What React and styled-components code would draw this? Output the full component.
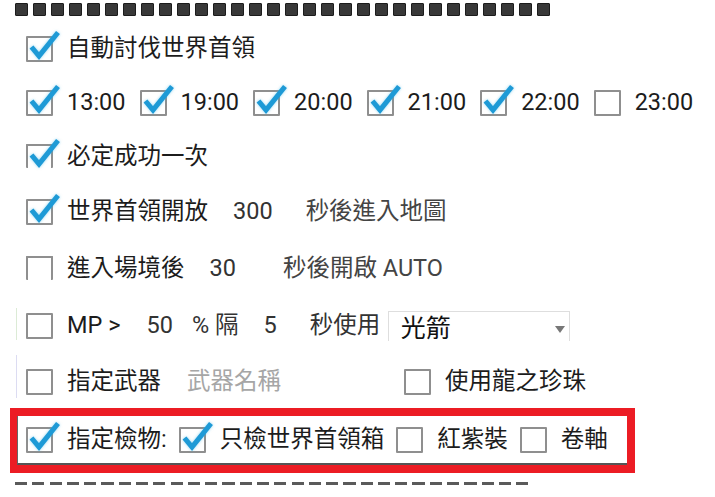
import styled, { createGlobalStyle } from "styled-components";

const Global = createGlobalStyle`
  body {
    margin: 0;
    background: #fff;
    font-family: Roboto, "Noto Sans CJK TC", sans-serif;
  }
`;

const Page = styled.div`
  width: 715px;
  height: 497px;
  padding-top: 3px;
  box-sizing: border-box;
  overflow: hidden;
  font-size: 23.5px;
  color: #1c1c1c;
`;

const SquareBar = styled.div`
  display: flex;
  gap: 5px;
  margin-left: 15px;
  height: 13px;
`;

const Square = styled.span`
  width: 13px;
  height: 13px;
  box-sizing: border-box;
  background: #383838;
  border: 1px solid #1c1c1c;
  border-radius: 1px;
`;

const DashBar = styled.div`
  display: flex;
  gap: 5.1px;
  margin: 9px 0 0 15px;
`;

const Dash = styled.span`
  width: 12.2px;
  height: 3px;
  background: #5a5a5a;
`;

const Row = styled.div`
  display: flex;
  align-items: center;
  height: ${(p) => p.$h}px;
  padding-top: ${(p) => p.$pt || 0}px;
  padding-left: ${(p) => (p.$rule ? 16 : 26)}px;
  box-sizing: border-box;
`;

const Rule = styled.span`
  align-self: flex-start;
  width: 1px;
  height: ${(p) => p.$h}px;
  margin-top: ${(p) => p.$top}px;
  margin-right: 9px;
  background: ${(p) => p.$c};
`;

const OptionWrap = styled.label`
  display: flex;
  align-items: center;
  margin-right: ${(p) => p.$mr || 0}px;
  white-space: nowrap;
`;

const Box = styled.span`
  position: relative;
  flex: none;
  width: 27px;
  height: ${(p) => (p.$cut ? 24 : 26)}px;
  margin-right: 14px;
  margin-bottom: ${(p) => (p.$cut ? 2 : 0)}px;
  box-sizing: border-box;
  border: 2px solid #8f8f8f;
  border-bottom: ${(p) => (p.$cut ? "none" : "2px solid #8f8f8f")};
  border-radius: 1px;
`;

const Tick = styled.svg`
  position: absolute;
  left: -2px;
  top: -2px;
  overflow: visible;
  filter: drop-shadow(0 0 1.5px rgba(60, 180, 230, 0.55));
`;

const Txt = styled.span`
  margin-left: ${(p) => p.$ml || 0}px;
  color: ${(p) => p.$c || "#1c1c1c"};
  line-height: 1;
  white-space: pre;
`;

const Select = styled.div`
  display: flex;
  align-items: center;
  justify-content: space-between;
  width: 182px;
  height: 30px;
  margin-left: 7.5px;
  padding: 0 4px 0 12px;
  box-sizing: border-box;
  border: 1px solid #dedede;
  border-bottom: none;
  font-size: 25px;
  color: #111;
`;

const Caret = styled.span`
  margin-top: 7px;
  border-left: 5.5px solid transparent;
  border-right: 5.5px solid transparent;
  border-top: 7px solid #777;
`;

const Frame = styled.div`
  width: 625px;
  margin-left: 10px;
  box-sizing: border-box;
  border: 8px solid #ec1c24;
  border-left-width: 7px;
`;

const FrameInner = styled.div`
  display: flex;
  align-items: center;
  height: 49px;
  padding-left: 8px;
  box-sizing: border-box;
  border-left: 1px solid #666;
  border-bottom: 2px solid #555;
`;

function Option({ on, cut, label, mr }) {
  return (
    <OptionWrap $mr={mr}>
      <Box $cut={cut}>
        {on && (
          <Tick width="27" height="26" viewBox="0 0 27 26">
            <polyline
              points="5.5,11 13,20 32,-3.5"
              fill="none"
              stroke="#1e9ad6"
              strokeWidth="5"
              strokeLinejoin="miter"
            />
          </Tick>
        )}
      </Box>
      <Txt>{label}</Txt>
    </OptionWrap>
  );
}

const times = [
  ["13:00", true],
  ["19:00", true],
  ["20:00", true],
  ["21:00", true],
  ["22:00", true],
  ["23:00", false],
];

export default function App() {
  return (
    <>
      <Global />
      <Page>
        <SquareBar>
          {Array.from({ length: 30 }, (_, i) => (
            <Square key={i} />
          ))}
        </SquareBar>

        <Row $h={54} style={{ marginTop: 6 }}>
          <Option on label="自動討伐世界首領" />
        </Row>

        <Row $h={54}>
          {times.map(([t, on]) => (
            <Option key={t} on={on} label={t} mr={14} />
          ))}
        </Row>

        <Row $h={54}>
          <Option on cut label="必定成功一次" />
        </Row>

        <Row $h={56}>
          <Option on label="世界首領開放" />
          <Txt $ml={25} $c="#333">300</Txt>
          <Txt $ml={33} $c="#444">秒後進入地圖</Txt>
        </Row>

        <Row $h={58}>
          <Option cut label="進入場境後" />
          <Txt $ml={25} $c="#333">30</Txt>
          <Txt $ml={47} $c="#444">秒後開啟 AUTO</Txt>
        </Row>

        <Row $h={55} $rule>
          <Rule $h={32} $top={10} $c="#dcebd6" />
          <Option label="MP >" />
          <Txt $ml={26} $c="#333">50</Txt>
          <Txt $ml={19} $c="#333">% 隔</Txt>
          <Txt $ml={25} $c="#333">5</Txt>
          <Txt $ml={33} $c="#333">秒使用</Txt>
          <Select>
            光箭
            <Caret />
          </Select>
        </Row>

        <Row $h={55} $pt={3} $rule>
          <Rule $h={43} $top={-1} $c="#dcdcf2" />
          <Option label="指定武器" />
          <Txt $ml={26} $c="#a6a6a6">武器名稱</Txt>
          <OptionWrap style={{ marginLeft: 123 }}>
            <Option label="使用龍之珍珠" />
          </OptionWrap>
        </Row>

        <Frame>
          <FrameInner>
            <Option on label="指定檢物:" mr={12} />
            <Option on label="只檢世界首領箱" mr={12} />
            <Option label="紅紫裝" mr={12} />
            <Option label="卷軸" />
          </FrameInner>
        </Frame>

        <DashBar>
          {Array.from({ length: 30 }, (_, i) => (
            <Dash key={i} />
          ))}
        </DashBar>
      </Page>
    </>
  );
}
